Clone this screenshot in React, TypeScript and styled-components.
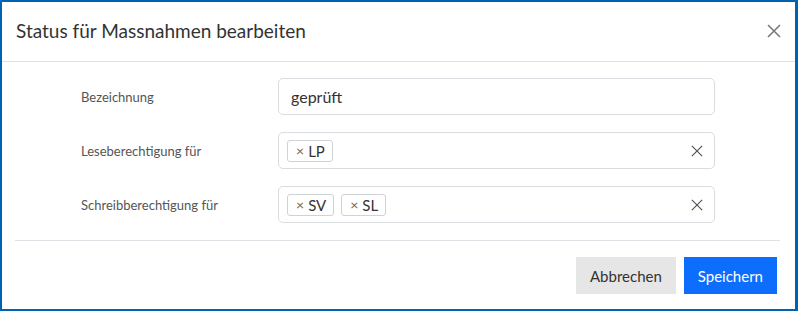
import React from "react";
import styled, { createGlobalStyle } from "styled-components";

const GlobalStyle = createGlobalStyle`
  html, body {
    margin: 0;
    padding: 0;
    background: #ffffff;
  }
  body {
    font-family: Lato, "Noto Sans", "Liberation Sans", sans-serif;
    color: #333;
  }
  * {
    box-sizing: border-box;
  }
`;

const Frame = styled.div`
  width: 798px;
  height: 311px;
  border: 2px solid #0063b1;
  border-right-width: 3px;
  background: #fff;
  display: flex;
  flex-direction: column;
`;

const Header = styled.div`
  height: 60px;
  display: flex;
  align-items: center;
  justify-content: space-between;
  padding: 0 14px 0 14px;
  border-bottom: 1px solid #dee2e6;
`;

const Title = styled.h2`
  margin: 0;
  font-size: 19px;
  font-weight: 400;
  color: #333;
  padding-bottom: 2px;
`;

const CloseButton = styled.button`
  border: none;
  background: transparent;
  padding: 0;
  width: 14px;
  height: 14px;
  display: flex;
  cursor: pointer;
  margin-top: -2px;
`;

const Form = styled.div`
  padding: 16px 80px 17px 79px;
  display: flex;
  flex-direction: column;
  gap: 17px;
`;

const Row = styled.div`
  display: grid;
  grid-template-columns: 197px 1fr;
  align-items: center;
`;

const Label = styled.label`
  font-size: 13px;
  color: #555;
`;

const Field = styled.div`
  height: 37px;
  border: 1px solid #d9dde1;
  border-radius: 5px;
  display: flex;
  align-items: center;
  padding: 0 11px 0 8px;
  gap: 7px;
`;

const Value = styled.span`
  font-size: 16px;
  color: #333;
  padding-left: 4px;
`;

const Tag = styled.span`
  height: 22px;
  border: 1px solid #cfd3d7;
  border-radius: 3px;
  display: inline-flex;
  align-items: center;
  gap: 4px;
  padding: 0 7px 0 8px;
  font-size: 15px;
  color: #333;
`;

const TagX = styled.span`
  font-size: 14px;
  color: #666;
`;

const Spacer = styled.div`
  flex: 1;
`;

const Footer = styled.div`
  margin: 0 15px 0 13px;
  border-top: 1px solid #dee2e6;
  padding: 16px 3px 0 0;
  display: flex;
  justify-content: flex-end;
  gap: 8px;
`;

const Button = styled.button<{ $primary?: boolean }>`
  height: 37px;
  border: none;
  border-radius: 0;
  padding: 0 14px;
  font-family: inherit;
  font-size: 15px;
  background: ${(p) => (p.$primary ? "#0d6efd" : "#e6e6e6")};
  color: ${(p) => (p.$primary ? "#fff" : "#333")};
  cursor: pointer;
`;

const Cross = ({ size, color, width }: { size: number; color: string; width: number }) => (
  <svg width={size} height={size} viewBox="0 0 14 14">
    <path d="M1 1 L13 13 M13 1 L1 13" stroke={color} strokeWidth={width} />
  </svg>
);

const TagItem = ({ label }: { label: string }) => (
  <Tag>
    <TagX>×</TagX>
    {label}
  </Tag>
);

export default function App() {
  return (
    <>
      <GlobalStyle />
      <Frame>
        <Header>
          <Title>Status für Massnahmen bearbeiten</Title>
          <CloseButton aria-label="Schliessen">
            <Cross size={14} color="#7a7a7a" width={1.6} />
          </CloseButton>
        </Header>
        <Form>
          <Row>
            <Label>Bezeichnung</Label>
            <Field>
              <Value>geprüft</Value>
            </Field>
          </Row>
          <Row>
            <Label>Leseberechtigung für</Label>
            <Field>
              <TagItem label="LP" />
              <Spacer />
              <Cross size={12} color="#555" width={1.4} />
            </Field>
          </Row>
          <Row>
            <Label>Schreibberechtigung für</Label>
            <Field>
              <TagItem label="SV" />
              <TagItem label="SL" />
              <Spacer />
              <Cross size={12} color="#555" width={1.4} />
            </Field>
          </Row>
        </Form>
        <Footer>
          <Button>Abbrechen</Button>
          <Button $primary>Speichern</Button>
        </Footer>
      </Frame>
    </>
  );
}
